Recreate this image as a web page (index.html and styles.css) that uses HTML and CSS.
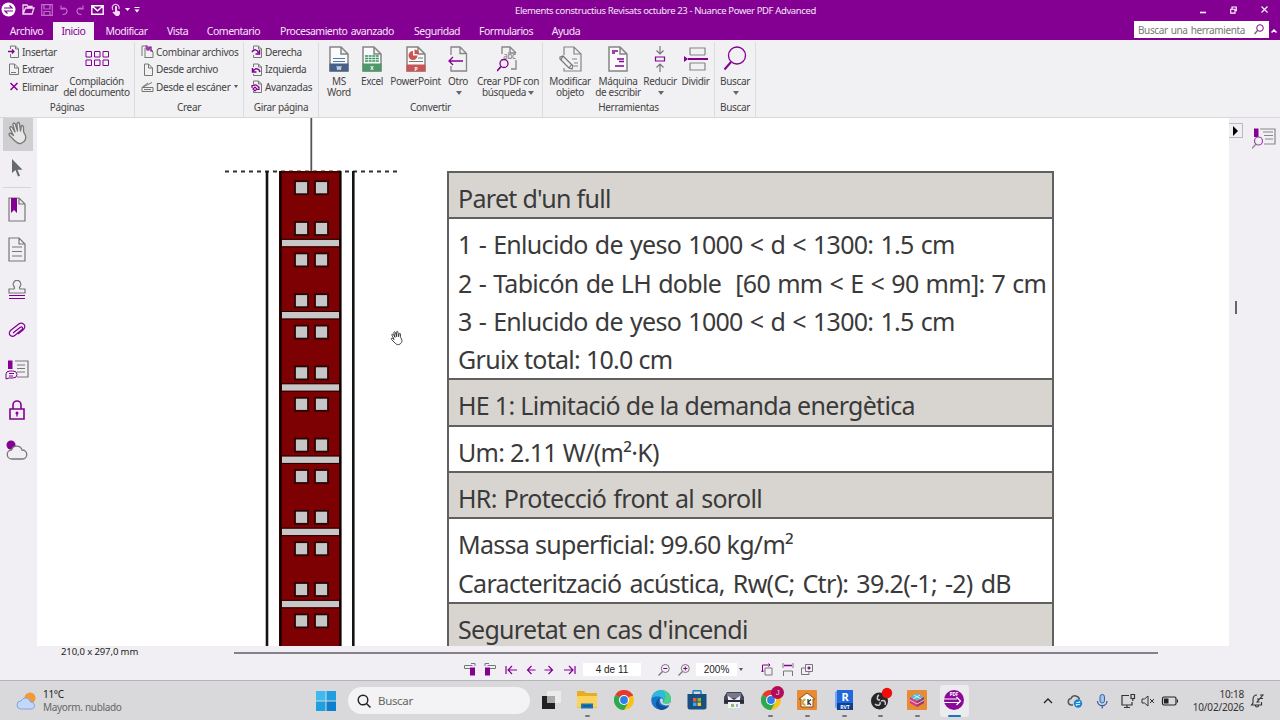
FILE: index.html
```html
<!DOCTYPE html>
<html lang="es">
<head>
    <meta charset="UTF-8">
    <meta name="viewport" content="width=device-width, initial-scale=1.0">
    <title>Elements constructius Revisats octubre 23 - Nuance Power PDF Advanced</title>
    <link rel="stylesheet" href="styles.css">
</head>
<body>
    <!-- Formas compartidas -->
    <svg class="defs">
        <symbol id="page" viewBox="0 0 20 26"><path d="M1 1h11l7 7v17H1zM12 1v7h7" fill="#fafafa" stroke="#858585" stroke-width="1.5"/></symbol>
        <symbol id="rotate" viewBox="0 0 12 13"><path d="M2.500 4V1h5l3 3v8.500h-8V10M7.500 1v3h3" fill="none" stroke="#777"/><path d="M1 7c2-3 5-3 6.500 1M8.500 5v4h-4" fill="none" stroke="#830093" stroke-width="1.500"/></symbol>
        <symbol id="chrome" viewBox="0 0 20 20"><circle cx="10" cy="10" r="10" fill="#fbc116"/><path d="M10 10 1.300 5A10 10 0 0 1 18.700 5z" fill="#e33b2e"/><path d="M1.300 5A10 10 0 0 0 10 20l4.500-8-4.500-2z" fill="#2da94f"/><path d="M10 5h8.700" stroke="#e33b2e" stroke-width="2"/><circle cx="10" cy="10" r="5" fill="#fff"/><circle cx="10" cy="10" r="3.900" fill="#2f7de9"/></symbol>
        <symbol id="hand" viewBox="0 0 22 24"><path d="M8 20 2.500 14.500c-1.500-2 .5-3 2-1.500l2 1.500L3 7.500C2.500 5.500 4.500 5 5.500 7l2.500 4L6 4c-.5-2 2-2.500 2.500-.5l2 6.500-.5-7c0-2 2.500-2 2.500 0l1 7 .8-4.500c.4-1.500 2.200-1.200 2.200.5v4c0 1 .5 2 1.500 3.500 1.500 3 1 5-1 7l-3 2c-2.500.5-4-.5-6-2.500z" fill="#fff" fill-opacity=".5" stroke="currentColor" stroke-width="1.300" stroke-linejoin="round"/></symbol>
    </svg>

    <!-- Barra de título -->
    <header class="titlebar">
        <div class="quick">
            <svg width="15" height="15" viewBox="0 0 15 15"><circle cx="7.500" cy="7.500" r="7" fill="#fff"/><path d="M3 6h8L8.500 3.500M12 9H4l2.500 2.500" fill="none" stroke="#830093" stroke-width="1.200"/></svg>
            <svg width="13" height="11" viewBox="0 0 13 11"><path d="M1 10V1h4l1 1.500h4V4M1 10l2.500-6H12l-2 6z" fill="none" stroke="#f3d9f6" stroke-width="1.300"/></svg>
            <svg class="dim" width="12" height="12" viewBox="0 0 12 12"><path d="M.7.700h10.600v10.600H.7zM3 1v4h6V1M3 11V7.500h6V11" fill="none" stroke="#e7b9ee" stroke-width="1.200"/></svg>
            <svg class="dim" width="10" height="10" viewBox="0 0 10 10"><path d="M2 .5v3.500h4M2 4c3-2 6-.5 6 2S6 9.500 3.500 9.500" fill="none" stroke="#e7b9ee" stroke-width="1.200"/></svg>
            <svg class="dim" width="10" height="10" viewBox="0 0 10 10"><path d="M8 .5v3.500H4M8 4C5 2 2 3.500 2 6s2 3.500 4.500 3.500" fill="none" stroke="#e7b9ee" stroke-width="1.200"/></svg>
            <svg width="13" height="10" viewBox="0 0 13 10"><path d="M.8.800h11.400v8.400H.8zl5.700 5 5.700-5" fill="none" stroke="#fff" stroke-width="1.400"/></svg>
            <svg width="12" height="13" viewBox="0 0 12 13"><path d="M3 7a3.500 3.500 0 1 1 6-1" fill="none" stroke="#e7b9ee" stroke-width="1.300"/><path d="M5 9V4c0-1.300 2-1.300 2 0v3.500l3 1v2.500l-1.500 2H6L2.500 9.500l1-1z" fill="#f3d9f6"/></svg>
            <svg width="5" height="3" viewBox="0 0 5 3"><path d="M0 0h5L2.500 3z" fill="#fff"/></svg>
            <svg width="6" height="6" viewBox="0 0 6 6"><path d="M.5 0h5v1h-5zM.5 2.500h5L3 5.500z" fill="#fff"/></svg>
        </div>
        <div class="window-title">Elements constructius Revisats octubre 23 - Nuance Power PDF Advanced</div>
        <div class="window-buttons">
            <svg width="6" height="8" viewBox="0 0 6 8"><path d="M0 6.500h6" stroke="#fff" stroke-width="1.600"/></svg>
            <svg width="7" height="8" viewBox="0 0 7 8"><path d="M2 3V1h4.300v3.800H5M.7 3.200H5v3.900H.7z" fill="none" stroke="#fff" stroke-width="1.100"/></svg>
            <svg width="7" height="7" viewBox="0 0 7 7"><path d="m.5.500 6 6m0-6-6 6" stroke="#fff" stroke-width="1.100"/></svg>
        </div>
    </header>

    <!-- Pestañas -->
    <nav class="tabs">
        <span>Archivo</span>
        <span class="active">Inicio</span>
        <span>Modificar</span>
        <span>Vista</span>
        <span>Comentario</span>
        <span>Procesamiento avanzado</span>
        <span>Seguridad</span>
        <span>Formularios</span>
        <span>Ayuda</span>
        <div class="tool-search">
            <span>Buscar una herramienta</span>
            <svg width="10" height="11" viewBox="0 0 10 11"><circle cx="6" cy="4" r="3.300" fill="none" stroke="#830093"/><path d="M3.500 6.500.5 10" stroke="#666" stroke-width="1.300"/></svg>
        </div>
        <svg class="collapse" width="6" height="4" viewBox="0 0 6 4"><path d="m.5 3.500 2.500-2.500 2.500 2.500" fill="none" stroke="#fff" stroke-width="1.500"/></svg>
    </nav>

    <!-- Cinta de opciones -->
    <section class="ribbon">
        <div class="group">
            <div class="group-body">
                <div class="small-list pages">
                    <span><svg width="12" height="13" viewBox="0 0 12 13"><path d="M2.500 4V1h5l3 3v8.500h-8V9M7.500 1v3h3" fill="none" stroke="#777"/><path d="M0 6.500h6M4 4.500l2 2-2 2" fill="none" stroke="#830093" stroke-width="1.300"/></svg>Insertar</span>
                    <span><svg width="12" height="13" viewBox="0 0 12 13"><path d="M1.500 1h5l4 4v6.500h-9zM6.500 1v4h4" fill="none" stroke="#777"/><path d="M3 9.500h5" stroke="#777"/></svg>Extraer</span>
                    <span><svg width="12" height="13" viewBox="0 0 12 13"><path d="m2.500 3 7 7m0-7-7 7" stroke="#830093" stroke-width="1.500"/></svg>Eliminar</span>
                </div>
                <div class="big compile">
                    <svg width="26" height="26" viewBox="0 0 26 26"><path d="M2 5.500h5.500v5.500H2zm8.500 0h5.500v5.500h-5.500zm8.500 0h5.500v5.500h-5.500zm-17 8.500h5.500v5.500H2zm8.500 0h5.500v5.500h-5.500zm8.500 0h5.500v5.500h-5.500z" fill="none" stroke="#830093"/></svg>
                    <span>Compilación<br>del documento</span>
                </div>
            </div>
            <div class="group-label">Páginas</div>
        </div>
        <div class="group">
            <div class="group-body">
                <div class="small-list create">
                    <span><svg width="13" height="13" viewBox="0 0 13 13"><path d="M1 11V1h3M4 12V3h4l4 4v5.500H3.500" fill="none" stroke="#777"/><path d="M4 1h2v4h2V2h2v4h2" fill="none" stroke="#830093" stroke-width="1.200"/></svg>Combinar archivos</span>
                    <span><svg width="13" height="13" viewBox="0 0 13 13"><path d="M3.500 1h4l4 4v7.500h-8zM7.500 1v4h4" fill="none" stroke="#777"/></svg>Desde archivo</span>
                    <span><svg width="13" height="13" viewBox="0 0 13 13"><path d="M1 7.500 11 2.500M1 7.500h11v4H1zM3 9.500h7M2 6.500 7 3" fill="none" stroke="#777"/></svg>Desde el escáner<i class="arrow"></i></span>
                </div>
            </div>
            <div class="group-label">Crear</div>
        </div>
        <div class="group">
            <div class="group-body">
                <div class="small-list turn">
                    <span><svg width="12" height="13"><use href="#rotate"/></svg>Derecha</span>
                    <span><svg width="12" height="13" viewBox="0 0 12 13"><path d="M2.500 4V1h5l3 3v8.500h-8V11M7.500 1v3h3" fill="none" stroke="#777"/><path d="M9 9C8 5 4 5 2 8M1.500 5v4h4" fill="none" stroke="#830093" stroke-width="1.500"/></svg>Izquierda</span>
                    <span><svg width="12" height="13" viewBox="0 0 12 13"><path d="M2.500 4V1h5l3 3v8.500h-8V11M7.500 1v3h3" fill="none" stroke="#777"/><path d="M1 8V5.500h2.500M1 6c3-2 6-1 7 2M8 6.500v3H5.500M2 9l2 2 2-2-2-2z" fill="none" stroke="#830093" stroke-width="1.200"/></svg>Avanzadas</span>
                </div>
            </div>
            <div class="group-label">Girar página</div>
        </div>
        <div class="group">
            <div class="group-body convert">
                <div class="big">
                    <svg width="20" height="26" viewBox="0 0 20 26"><use href="#page"/><path d="M.5 17.500h19v8H.5z" fill="#466088"/><path d="M4 12.500h12M4 15.500h12" stroke="#4c78ad"/><text x="10" y="24" class="tag">W</text></svg>
                    <span>MS<br>Word</span>
                </div>
                <div class="big">
                    <svg width="20" height="26" viewBox="0 0 20 26"><use href="#page"/><path d="M.5 17.500h19v8H.5z" fill="#4f9869"/><path d="M3 10h14M3 12.500h14M3 15h14" stroke="#34945b" stroke-width="1.500" stroke-dasharray="3 .6"/><text x="10" y="24" class="tag">X</text></svg>
                    <span>Excel</span>
                </div>
                <div class="big">
                    <svg width="20" height="26" viewBox="0 0 20 26"><use href="#page"/><path d="M.5 18.500h19v7H.5z" fill="#c65656"/><path d="M7 5a4.500 4.500 0 1 0 4.500 4.500H7z" fill="#cc5451"/><path d="M8.500 3.500V8H13a4.500 4.500 0 0 0-4.500-4.500z" fill="#cc5451"/><path d="M12 12h5M3 15.500h14" stroke="#777"/><text x="10" y="24.500" class="tag">P</text></svg>
                    <span>PowerPoint</span>
                </div>
                <div class="big">
                    <svg width="20" height="26" viewBox="0 0 20 26"><path d="M3 9V1h9l6.500 6.500V25H3v-5M12 1v6.500h6.500" fill="none" stroke="#858585" stroke-width="1.300"/><path d="M15 15H1m4-4-4 4 4 4" fill="none" stroke="#830093" stroke-width="1.300"/></svg>
                    <span>Otro<br><i class="arrow large"></i></span>
                </div>
                <div class="big">
                    <svg width="22" height="26" viewBox="0 0 22 26"><path d="M5 8V1h8l6 6M19 14v9h-5M5 13v1M13 1v6h6" fill="none" stroke="#858585" stroke-width="1.300"/><text x="12.500" y="13" class="abc">abc</text><circle cx="7" cy="17.500" r="4" fill="#f1f0f2" stroke="#830093" stroke-width="1.300"/><path d="m4 20.500-4 4.500" stroke="#830093" stroke-width="1.800"/></svg>
                    <span>Crear PDF con<br>búsqueda<i class="arrow large"></i></span>
                </div>
            </div>
            <div class="group-label">Convertir</div>
        </div>
        <div class="group">
            <div class="group-body tools">
                <div class="big">
                    <svg width="23" height="26" viewBox="0 0 23 26"><path d="M5 9V1h10l7 7v17H5v-3M15 1v7h7M13 13h5M15 17h4M15 20h4" fill="none" stroke="#858585" stroke-width="1.200"/><path d="m1 11 3-1 10 10-1 3-3-1L1 13zm3-1-2 4m8 8 3-4" fill="#f1f0f2" stroke="#777" stroke-width="1.200"/></svg>
                    <span>Modificar<br>objeto</span>
                </div>
                <div class="big">
                    <svg width="20" height="26" viewBox="0 0 20 26"><use href="#page"/><path d="M4 5h6M4 7h3M9 13h7M11 15.500h5M7 20h9" stroke="#830093" stroke-width="1.300"/></svg>
                    <span>Máquina<br>de escribir</span>
                </div>
                <div class="big">
                    <svg width="12" height="26" viewBox="0 0 12 26"><path d="M6 0v8M2.500 4.500 6 8l3.500-3.500M6 26v-8m-3.500 3.500L6 18l3.500 3.500" fill="none" stroke="#777" stroke-width="1.200"/><path d="M1.500 11h9v4h-9z" fill="none" stroke="#830093" stroke-width="1.200"/></svg>
                    <span>Reducir<br><i class="arrow large"></i></span>
                </div>
                <div class="big">
                    <svg width="24" height="26" viewBox="0 0 24 26"><path d="M6 9V2h15v7M6 17v7h15v-7M6 9h15M6 17h15" fill="none" stroke="#858585" stroke-width="1.200"/><path d="M4 13h20" stroke="#830093" stroke-width="2"/><path d="m0 10 4 3-4 3z" fill="#830093"/></svg>
                    <span>Dividir</span>
                </div>
            </div>
            <div class="group-label">Herramientas</div>
        </div>
        <div class="group">
            <div class="group-body find">
                <div class="big">
                    <svg width="24" height="26" viewBox="0 0 24 26"><circle cx="14" cy="9.500" r="8.500" fill="none" stroke="#830093" stroke-width="1.300"/><path d="m8 16-6.500 7.500" stroke="#830093" stroke-width="2"/></svg>
                    <span>Buscar<br><i class="arrow large"></i></span>
                </div>
            </div>
            <div class="group-label">Buscar</div>
        </div>
    </section>

    <!-- Zona de trabajo -->
    <main class="workspace">
        <aside class="left-tools">
            <div class="tool selected"><svg width="22" height="24"><use href="#hand"/></svg></div>
            <div class="tool pointer"><svg width="12" height="20" viewBox="0 0 12 20"><path d="M1 1v14l3.500-3 2.500 6.500 2-.8-2.500-6h5z" fill="#666a6c"/></svg></div>
            <div class="tool"><svg width="18" height="26" viewBox="0 0 18 26"><path d="M1 1h10l6 6v17H1zM11 1v6h6" fill="none" stroke="#777" stroke-width="1.200"/><path d="M3 1h6v15l-3-3-3 3z" fill="#830093"/></svg></div>
            <div class="tool"><svg width="18" height="26" viewBox="0 0 18 26"><path d="M1 1h10l6 6v17H1zM11 1v6h6M4 10h10M4 14.500h10M4 19h10" fill="none" stroke="#777" stroke-width="1.200"/></svg></div>
            <div class="tool"><svg width="18" height="20" viewBox="0 0 18 20"><path d="M1 13V9h5c1.500-1 0-2-.7-4a3.800 3.800 0 1 1 7.400 0c-.7 2-2.200 3-.7 4h5v4z" fill="none" stroke="#777" stroke-width="1.200"/><path d="M1 15.500h16M1 18.500h16" stroke="#830093" stroke-width="1.200"/></svg></div>
            <div class="tool"><svg width="18" height="18" viewBox="0 0 18 18"><path d="m5 12 7-5.500c2-1.500 3.500.5 2 2L8 13.500c-4 4-9 0-5.500-4L9.500 4c4-4 10 0 6 4.500L10 13" fill="none" stroke="#830093" stroke-width="1.200"/></svg></div>
            <div class="tool"><svg width="24" height="22" viewBox="0 0 24 22"><path d="M10 2h13v16H12M12 6h8M12 9.500h8M12 13h8" fill="none" stroke="#777" stroke-width="1.200"/><path d="M3 1.500h4.500V10H3z" fill="#830093"/><path d="M1 20v-5q0-3 4-3h3q4 0 4 3.500T8 19H4zM4 14.500h5M4 17h4" fill="none" stroke="#830093"/></svg></div>
            <div class="tool"><svg width="16" height="20" viewBox="0 0 16 20"><path d="M1 9h14v10H1zM4 9V5a4 4 0 0 1 8 0v4" fill="none" stroke="#830093" stroke-width="1.600"/><circle cx="8" cy="13" r="1.500" fill="#830093"/><path d="M8 13v3.500" stroke="#830093" stroke-width="1.300"/></svg></div>
            <div class="tool"><svg width="22" height="20" viewBox="0 0 22 20"><circle cx="5" cy="5" r="4.500" fill="#830093"/><path d="M6 19a4.500 4.500 0 0 1-.5-9 5.500 5.500 0 0 1 10.500 0 4.500 4.500 0 0 1 .5 9z" fill="#f1eff3" stroke="#777" stroke-width="1.300"/></svg></div>
        </aside>

        <div class="document">
            <!-- Sección del muro -->
            <svg class="wall" width="180" height="528" viewBox="220 118 180 528">
                <defs>
                    <g id="hole"><rect x="-6.500" y="-6.500" width="13" height="13" fill="#c6c6c6" stroke="#280505" stroke-width="1.800"/></g>
                    <g id="brick">
                        <use href="#hole" x="301.500" y="187.700"/><use href="#hole" x="321.500" y="187.700"/>
                        <use href="#hole" x="301.500" y="228.500"/><use href="#hole" x="321.500" y="228.500"/>
                        <rect x="282" y="239.800" width="57" height="6.500" fill="#c8c7c7"/>
                        <path d="M281 246.900h59M281 239.300h59" stroke="#220000"/>
                    </g>
                </defs>
                <path d="M225 171.500h172" stroke="#333" stroke-width="2" stroke-dasharray="4 4"/>
                <rect x="279" y="171" width="62" height="480" fill="#7d0003"/>
                <g>
                    <use href="#brick"/>
                    <use href="#brick" y="72.200"/>
                    <use href="#brick" y="144.400"/>
                    <use href="#brick" y="216.600"/>
                    <use href="#brick" y="288.800"/>
                    <use href="#brick" y="361"/>
                    <use href="#brick" y="433.200"/>
                </g>
                <path d="M280 172h60" stroke="#4b0000" stroke-width="2"/>
                <path d="M280.500 171v480M340.500 171v480" stroke="#0b0000" stroke-width="2.200"/>
                <path d="M267 171v480M353.300 171v480" stroke="#141414" stroke-width="2.600"/>
                <path d="M311.300 118v53" stroke="#555" stroke-width="1.800"/>
            </svg>

            <div class="sheet">
                <div class="row head">Paret d'un full</div>
                <div class="row">
                    <p class="spaced">1 - Enlucido de yeso 1000 &lt; d &lt; 1300: 1.5 cm</p>
                    <p class="spaced">2 - Tabicón de LH doble&nbsp; [60 mm &lt; E &lt; 90 mm]: 7 cm</p>
                    <p class="spaced">3 - Enlucido de yeso 1000 &lt; d &lt; 1300: 1.5 cm</p>
                    <p>Gruix total: 10.0 cm</p>
                </div>
                <div class="row head">HE 1: Limitació de la demanda energètica</div>
                <div class="row">Um: 2.11 W/(m²·K)</div>
                <div class="row head spaced">HR: Protecció front al soroll</div>
                <div class="row">
                    <p>Massa superficial: 99.60 kg/m²</p>
                    <p class="extra-spaced">Caracterització acústica, Rw(C; Ctr): 39.2(-1; -2) dB</p>
                </div>
                <div class="row head">Seguretat en cas d'incendi</div>
            </div>
            <svg class="cursor" width="14" height="16" viewBox="0 0 22 24"><use href="#hand"/></svg>
        </div>

        <div class="gutter">
            <div class="expand"><svg width="5" height="10" viewBox="0 0 5 10"><path d="m0 0 5 5-5 5z" fill="#000"/></svg></div>
            <div class="thumb"></div>
        </div>
        <aside class="right-tools">
            <svg width="24" height="23" viewBox="0 0 24 23"><path d="M8 2h15v15H12M11 5h10M12 8.500h9M13 12h8" fill="none" stroke="#888" stroke-width="1.200"/><path d="M2 1.500h4.500V10H2z" fill="#830093"/><circle cx="6.500" cy="14" r="4" fill="#f1eff3" stroke="#9a4aa5" stroke-width="1.200"/><path d="m4 17-4 4.500" stroke="#888" stroke-width="1.200"/></svg>
        </aside>
    </main>

    <!-- Barra de estado -->
    <footer class="status">
        <div class="status-top">
            <span>210,0 x 297,0 mm</span>
            <div class="hscroll"></div>
        </div>
        <div class="status-nav">
            <svg viewBox="0 0 12 13"><path d="M6 5.500H.5V2.500h8" fill="none" stroke="#777"/><path d="M6 4.500h5v8H6z" fill="#830093"/><path d="M7 .5h4V3" fill="none" stroke="#777"/></svg>
            <svg viewBox="0 0 12 13"><path d="M6 5.500h5.500V2.500h-8" fill="none" stroke="#777"/><path d="M1 4.500h5v8H1z" fill="#830093"/><path d="M5 .5H1V3" fill="none" stroke="#777"/></svg>
            <svg viewBox="0 0 12 13" class="line"><path d="M1 3v8M12 7H3m4-4L3 7l4 4"/></svg>
            <svg viewBox="0 0 12 13" class="line"><path d="M10.500 7h-8m4-4-4 4 4 4"/></svg>
            <svg viewBox="0 0 12 13" class="line"><path d="M1.500 7h8m-4-4 4 4-4 4"/></svg>
            <svg viewBox="0 0 12 13" class="line"><path d="M11 3v8M0 7h9M5 3l4 4-4 4"/></svg>
            <div class="field page-field">4 de 11</div>
            <svg viewBox="0 0 12 13"><circle cx="7.300" cy="5.500" r="4" fill="none" stroke="#777"/><path d="M5.300 5.500h4" stroke="#830093"/><path d="m4.500 8.500-4 4" stroke="#777" stroke-width="1.300"/></svg>
            <svg viewBox="0 0 12 13"><circle cx="7.300" cy="5.500" r="4" fill="none" stroke="#777"/><path d="M5.300 5.500h4m-2-2v4" stroke="#830093"/><path d="m4.500 8.500-4 4" stroke="#777" stroke-width="1.300"/></svg>
            <div class="field zoom-field">200%</div>
            <i class="arrow"></i>
            <svg viewBox="0 0 12 13"><path d="M4 5h7v7H4z" fill="none" stroke="#777"/><path d="M1.500 9V2H9M0 7.500 1.500 9 3 7.500M7.500.5 9 2 7.500 3.500" fill="none" stroke="#830093"/></svg>
            <svg viewBox="0 0 12 13"><path d="M1 0v5M11 0v5M1.500 13V8h9v5" fill="none" stroke="#777"/><path d="M2 2.500h8" stroke="#830093" stroke-width="1.500"/></svg>
            <svg viewBox="0 0 12 13"><path d="M4.500 1.500h7v7h-7zM4.500 5H.5v6.500H8v-3" fill="none" stroke="#777"/><path d="M6.500 5h3M8 3.500v3" stroke="#830093" stroke-width="1.300"/></svg>
        </div>
    </footer>

    <!-- Barra de tareas -->
    <footer class="taskbar">
        <div class="weather">
            <svg width="20" height="18" viewBox="0 0 20 18"><circle cx="14" cy="6" r="5.500" fill="#f29a33"/><path d="M5 17a4 4 0 0 1 0-8 5 5 0 0 1 9.500 1A3.600 3.600 0 0 1 16 17z" fill="#c2d7fa" stroke="#83a5e0"/></svg>
            <div><b>11°C</b><br>Mayorm. nublado</div>
        </div>
        <svg class="start" width="20" height="20" viewBox="0 0 20 20"><path d="M0 0h9.500v9.500H0z" fill="#3fb9ee"/><path d="M10.500 0H20v9.500h-9.500zM0 10.500h9.500V20H0z" fill="#1e9fe0"/><path d="M10.500 10.500H20V20h-9.500z" fill="#0d7fce"/></svg>
        <div class="search">
            <svg width="14" height="14" viewBox="0 0 14 14"><circle cx="6" cy="6" r="4.800" fill="none" stroke="#222" stroke-width="1.400"/><path d="m9.500 9.500 4 4" stroke="#222" stroke-width="1.500"/></svg>
            Buscar
        </div>
        <div class="apps">
            <div class="app"><svg viewBox="0 0 20 20"><path d="M1 6h13v13H1z" fill="#222"/><path d="M6 1h14v12H6z" fill="#eee" opacity=".85"/><path d="M6 6h8v7H6z" fill="#aaa"/></svg></div>
            <div class="app run"><svg viewBox="0 0 20 20"><path d="M0 1h7l2 2h11v15H0z" fill="#e9ad22"/><path d="M0 6h20v11.500H0z" fill="#fbd25b"/><path d="M4 13.500h12v5H4z" fill="#1675b5"/><path d="M6 16h8" stroke="#0d4f86"/></svg></div>
            <div class="app"><svg><use href="#chrome"/></svg></div>
            <div class="app"><svg viewBox="0 0 20 20"><circle cx="10" cy="10" r="9.800" fill="#1976c9"/><path d="M.5 8C2 2 6 0 10 0c6 0 10 4.500 10 9 0 3-2 5-5.500 5-3 0-3-1.500-2-3 .5-4-6-6-12-3z" fill="#2fb9dc"/><path d="M12 .3c5 .7 8 4.500 8 8.700 0 3-2 5-5.500 5-2 0-2.500-1-2.500-2 4-3 3-8 0-11.700z" fill="#4fd087"/><path d="M9 8c-4 5 1 10 9 8-2 2.500-5 4-8 4-5-1-8-8-1-12z" fill="#104f9b"/><path d="M9 10c0 4 4 6.500 9.500 5L20 12c-2 2-5 2.500-7.500 1.500C11 12 12 11 12 10c-.5-2-3-2-3 0z" fill="#d9d8da"/></svg></div>
            <div class="app"><svg viewBox="0 0 20 20"><path d="M6 4V1.500Q6 .8 7 .8h6q1 0 1 .7V4" fill="none" stroke="#1b83bb" stroke-width="1.500"/><path d="M.5 4h19v13q0 2.500-2.500 2.500H3Q.5 19.500.5 17z" fill="#184f80"/><path d="M6 8h3.500v3.500H6z" fill="#ef5a32"/><path d="M10.500 8H14v3.500h-3.500z" fill="#85be2c"/><path d="M6 12.500h3.500V16H6z" fill="#34aae6"/><path d="M10.500 12.500H14V16h-3.500z" fill="#fcc526"/></svg></div>
            <div class="app"><svg viewBox="0 0 20 20"><path d="M3 2h14l3 5v7H0V7z" fill="#434554"/><path d="M3 3h14v5H3z" fill="#777989"/><path d="m4 6 6 4 6-4v6H4z" fill="#e9efff"/><path d="M0 10h20v3H0z" fill="#2c2c39"/><path d="M4 12h12v6H4z" fill="#f2f2f2"/><path d="M7 14h3v3H7z" fill="#91bc66"/><path d="M12 14h2v3h-2z" fill="#9bb3d6"/></svg></div>
            <div class="app run"><svg><use href="#chrome"/></svg><span class="badge">J</span></div>
            <div class="app run"><svg viewBox="0 0 20 20"><rect width="20" height="20" rx="1" fill="#e78c35"/><path d="m10 3 8 6h-2v8H4V9H2z" fill="#fff" stroke="#8a5217"/><path d="M11 9v6M14 9.500l-3 2.500 3 3" fill="none" stroke="#333" stroke-width="1.200"/><path d="M8.500 9.500a2.500 2.500 0 0 0 0 5.500" fill="none" stroke="#e1a22e" stroke-width="2"/></svg></div>
            <div class="app run"><svg viewBox="0 0 20 20"><path d="M1 2 4 0v20l-3-3z" fill="#70a9f1"/><path d="M3 0h16v13H3z" fill="#2068dc"/><path d="M3 13h16v7H3z" fill="#0d3f93"/><text x="11" y="11" class="rvt">R</text><text x="11" y="18.500" class="rvt-sub">RVT</text></svg></div>
            <div class="app run"><svg viewBox="0 0 20 20"><circle cx="8.500" cy="11" r="8.500" fill="#25262a"/><path d="M9 10c-4 0-3-4-1-5M10 11c4-2 5 2 4 4M9 12c1 4-3 4-5 2" fill="none" stroke="#ccc" stroke-width="1.500"/><circle cx="16" cy="3" r="5.200" fill="#f10c0c"/></svg></div>
            <div class="app run"><svg viewBox="0 0 20 20"><rect width="20" height="20" rx="1" fill="#e78c35"/><path d="m3 7 7-4 7 4-7 4z" fill="#59bad4"/><path d="m3 7 7 4v6l-7-4z" fill="#d6397b"/><path d="m17 7-7 4v6l7-4z" fill="#9d356c"/><path d="m7 5 7 4M13 5 6 9M3 10l7 4 7-4" stroke="#fff" fill="none" stroke-width=".7"/></svg></div>
            <div class="app current"><svg viewBox="0 0 20 20"><circle cx="10" cy="10" r="10" fill="#8b0b99"/><path d="M0 12.500h16M0 9h13M12.500 7l4 4-4 4" stroke="#fff" stroke-width="1.200" fill="none"/><text x="10" y="6" class="pdf">PDF</text></svg></div>
        </div>
        <div class="tray">
            <svg viewBox="0 0 18 16"><path d="m5 10 4-4 4 4" fill="none" stroke="#222" stroke-width="1.300"/></svg>
            <svg viewBox="0 0 18 16"><path d="M7 12H5a3.300 3.300 0 0 1 0-6.500 4.500 4.500 0 0 1 8.500 1" fill="none" stroke="#555" stroke-width="1.500"/><circle cx="12" cy="10.500" r="4.200" fill="#1686d5"/><path d="M10 9.500h4l-1-1.500M14 11.500h-4l1 1.500" fill="none" stroke="#fff" stroke-width=".8"/></svg>
            <svg viewBox="0 0 18 16"><rect x="7" y="1.500" width="4.500" height="8.500" rx="2.250" fill="#9ec3ee" stroke="#3562a5"/><path d="M4.500 8a4.700 4.700 0 0 0 9.500 0M9.300 13v2.500" fill="none" stroke="#3562a5" stroke-width="1.300"/></svg>
            <svg viewBox="0 0 18 16"><path d="M10 2.500H3v9.500h10V9M5 14.500h6M8 12v2" fill="none" stroke="#333" stroke-width="1.200"/><path d="M12 1.500h3.500v4H12zM13.800 5.500V8" fill="none" stroke="#333" stroke-width="1.200"/></svg>
            <svg viewBox="0 0 18 16"><path d="M3 6h2.500L9 3v10l-3.500-3H3zM11 6l4 4m0-4-4 4" fill="none" stroke="#333"/></svg>
            <svg viewBox="0 0 18 16"><rect x="1.500" y="4" width="13.500" height="8" rx="1.500" fill="none" stroke="#222" stroke-width="1.200"/><path d="M3 5.500h4.500v5H3zM16 6.500h1v3h-1z" fill="#222"/></svg>
            <div class="clock">10:18<br>10/02/2026</div>
            <svg viewBox="0 0 18 16"><path d="M9 2C5.500 2 5 5 5 7v3l-1.500 2h10V9M7.500 12.500c0 2 3 2 3 0M9 6h2.500L9 9h2.500M12 2h3l-3 3.500h3" fill="none" stroke="#333" stroke-width="1.100"/></svg>
        </div>
    </footer>
</body>
</html>
```

FILE: styles.css
```css
/* Estilo general */
* {
    box-sizing: border-box;
}

body {
    margin: 0;
    width: 1280px;
    height: 720px;
    overflow: hidden;
    display: flex;
    flex-direction: column;
    font-family: "Noto Sans", "Open Sans", sans-serif;
    font-size: 10px;
    letter-spacing: -0.33px;
    color: #444;
    background-color: #f1eff3;
    white-space: nowrap;
}

svg {
    display: block;
    flex: none;
}

.defs {
    display: none;
}

/* Barra de título */
.titlebar {
    height: 22px;
    flex: none;
    display: grid;
    grid-template-columns: 400px 531px 349px;
    align-items: center;
    background-color: #830093;
    color: #f6e6f8;
}

.quick {
    display: flex;
    align-items: center;
    gap: 6px;
    padding-left: 1px;
    padding-bottom: 3px;
}

.quick svg:nth-child(8) {
    margin-left: -3px;
}

.quick svg:nth-child(9) {
    margin-left: -2px;
}

.dim {
    opacity: 0.6;
}

.window-title {
    text-align: center;
    font-size: 9.5px;
    letter-spacing: -0.37px;
    padding-bottom: 1px;
}

.window-buttons {
    display: flex;
    justify-content: flex-end;
    gap: 24px;
    padding-right: 12px;
    padding-bottom: 2px;
}

/* Pestañas */
.tabs {
    height: 18px;
    flex: none;
    display: grid;
    grid-template-columns: 53px 41px 65px 37px 75px 132px 68px 70px 50px 678px 11px;
    background-color: #830093;
    color: #f6e6f8;
    font-size: 10.5px;
    letter-spacing: -0.5px;
    word-spacing: 1px;
    line-height: 18px;
    text-align: center;
}

.tabs .active {
    background-color: #f5f3f6;
    color: #830093;
}

.tool-search {
    width: 135px;
    height: 17px;
    margin-top: -1px;
    justify-self: end;
    display: flex;
    align-items: center;
    justify-content: space-between;
    padding: 0 5px 0 4px;
    background-color: #fff;
    color: #777;
    font-size: 10px;
    letter-spacing: -0.4px;
}

.collapse {
    margin: 7px 0 0 2px;
}

/* Cinta de opciones */
.ribbon {
    height: 78px;
    flex: none;
    display: grid;
    grid-template-columns: 135px 109px 75px 224px 172px 41px;
    padding-top: 2px;
    background-color: #f1f0f2;
    border-bottom: 1px solid #d8d7d9;
}

.group {
    border-right: 1px solid #dcdbdd;
}

.group-body {
    height: 56px;
    display: flex;
}

.group-label {
    height: 18px;
    line-height: 18px;
    text-align: center;
}

.small-list {
    display: flex;
    flex-direction: column;
    padding-top: 1px;
}

.small-list span {
    height: 17.5px;
    display: flex;
    align-items: center;
    gap: 2px;
}

.pages {
    padding-left: 8px;
    width: 62px;
}

.create {
    padding-left: 6px;
}

.turn {
    padding-left: 7px;
}

.big {
    display: flex;
    flex-direction: column;
    align-items: center;
    padding-top: 4px;
    line-height: 11px;
    text-align: center;
}

.big svg {
    margin-bottom: 4px;
}

.compile {
    width: 69px;
}

.convert {
    display: grid;
    grid-template-columns: 26px 40px 47px 38px 62px;
    padding-left: 7px;
}

.tools {
    display: grid;
    grid-template-columns: 46px 50px 34px 37px;
    padding-left: 4px;
}

.find {
    justify-content: center;
}

.arrow {
    display: inline-block;
    width: 0;
    height: 0;
    margin-left: 2px;
    border: 2.5px solid transparent;
    border-top: 3px solid #555;
    border-bottom: 0;
}

.arrow.large {
    margin-left: 2px;
    border-width: 4px 3.5px 0;
    border-top-color: #666;
    vertical-align: 1px;
}

.tag {
    font-size: 5px;
    font-weight: bold;
    fill: #fff;
    text-anchor: middle;
    letter-spacing: 0;
}

.abc {
    font-size: 8px;
    fill: #777;
    text-anchor: middle;
}

/* Zona de trabajo */
.workspace {
    height: 528px;
    flex: none;
    display: flex;
}

.left-tools {
    width: 37px;
    display: flex;
    flex-direction: column;
}

.tool {
    width: 33px;
    height: 40px;
    display: flex;
    align-items: center;
    justify-content: center;
}

.tool.selected {
    width: 30px;
    height: 33px;
    margin-left: 3px;
    padding: 0 1px 3px 0;
    background-color: #cfced0;
    color: #777;
}

.tool.pointer {
    width: 28px;
    height: 37px;
    margin: 0 3px 2px;
    padding-bottom: 2px;
    border-bottom: 1px solid #d5d4d6;
}

.document {
    position: relative;
    width: 1192px;
    display: flex;
    overflow: hidden;
    background-color: #fff;
}

.wall {
    margin-left: 183px;
}

/* Tabla de características */
.sheet {
    width: 607px;
    height: 600px;
    margin: 53px 0 0 47px;
    border: 2px solid #606060;
    border-top: 0;
    font-size: 25px;
    letter-spacing: -0.7px;
    line-height: 38.3px;
    color: #3a3a3a;
}

.row {
    padding: 6px 0 0 9px;
    border-top: 2px solid #606060;
}

.row.head {
    background-color: #d8d5d1;
}

.row p {
    margin: 0;
}

.spaced {
    word-spacing: 1.3px;
}

.extra-spaced {
    word-spacing: 2.2px;
}

/* Puntero de la mano sobre la página */
.cursor {
    position: absolute;
    left: 353px;
    top: 212px;
    color: #222;
}

.gutter {
    width: 14px;
    display: flex;
    flex-direction: column;
    align-items: center;
}

.expand {
    width: 14px;
    height: 15px;
    margin-top: 5px;
    display: flex;
    align-items: center;
    justify-content: center;
    border: 1px solid #bbb;
    border-left: 0;
}

.thumb {
    width: 2px;
    height: 13px;
    margin-top: 163px;
    background-color: #666;
}

.right-tools {
    padding: 9px 0 0 9px;
}

/* Barra de estado */
.status {
    height: 35px;
    flex: none;
    border-bottom: 1px solid #b5b4b6;
}

.status-top {
    height: 12px;
    display: flex;
    align-items: center;
    padding-left: 61px;
    color: #222;
}

.status-top span {
    width: 173px;
    margin-top: -1px;
    font-size: 9.5px;
    letter-spacing: -0.1px;
}

.hscroll {
    width: 924px;
    height: 2px;
    margin-top: 2px;
    background-color: #858188;
}

.status-nav {
    height: 22px;
    display: grid;
    grid-template-columns: 20px 21px 20px 18px 21px 19px 75px 20px 18px 43px 22px 21px 19px 14px;
    align-items: center;
    padding-left: 464px;
    color: #222;
    font-family: "Liberation Sans", Arial, sans-serif;
    letter-spacing: 0;
}

.status-nav svg {
    width: 12px;
    height: 13px;
}

.status-nav .line {
    fill: none;
    stroke: #830093;
    stroke-width: 1.2;
}

.field {
    height: 13px;
    line-height: 13px;
    background-color: #fff;
    text-align: center;
}

.page-field {
    width: 58px;
}

.zoom-field {
    width: 41px;
}

.status-nav .arrow {
    margin-left: 0;
}

/* Barra de tareas */
.taskbar {
    height: 39px;
    flex: none;
    display: flex;
    align-items: center;
    background-color: #d9d8da;
    font-size: 10px;
}

.weather {
    width: 316px;
    display: flex;
    align-items: center;
    gap: 7px;
    padding-left: 16px;
    line-height: 13px;
    color: #666;
}

.weather b {
    font-weight: normal;
    color: #222;
}

.search {
    width: 182px;
    height: 27px;
    margin-left: 12px;
    display: flex;
    align-items: center;
    gap: 7px;
    padding-left: 9px;
    border-radius: 14px;
    background-color: #f3f2f4;
    color: #666;
    font-size: 11.5px;
}

.apps {
    display: flex;
    margin-left: 2px;
}

.app {
    position: relative;
    width: 36.7px;
    height: 32px;
    padding: 5px 0 0 8.5px;
}

.app svg {
    width: 20px;
    height: 20px;
    overflow: visible;
}

.app.run::after,
.app.current::after {
    content: "";
    position: absolute;
    left: 16px;
    bottom: 0;
    width: 5px;
    height: 2px;
    border-radius: 1px;
    background-color: #777;
}

.app.current::before {
    content: "";
    position: absolute;
    left: 4px;
    top: 0;
    width: 29px;
    height: 32px;
    border-radius: 3px;
    background-color: #ecebed;
}

.app.current svg {
    position: relative;
}

.app.current::after {
    left: 12px;
    width: 13px;
    background-color: #1677bd;
}

.badge {
    position: absolute;
    left: 19px;
    top: 1px;
    width: 13px;
    height: 13px;
    border-radius: 50%;
    background-color: #b00b5c;
    color: #f5c9dd;
    font-family: "Liberation Sans", Arial, sans-serif;
    font-size: 8px;
    line-height: 13px;
    text-align: center;
}

.rvt {
    font-size: 11px;
    font-weight: bold;
    fill: #fff;
    text-anchor: middle;
}

.rvt-sub {
    font-size: 5px;
    font-weight: bold;
    fill: #fff;
    text-anchor: middle;
    letter-spacing: 0;
}

.pdf {
    font-size: 4.5px;
    font-weight: bold;
    fill: #fff;
    text-anchor: middle;
    letter-spacing: 0;
}

.tray {
    margin-left: auto;
    display: grid;
    grid-template-columns: 27px 27px 26px 20px 22px 28px 55px 36px;
    align-items: center;
    color: #333;
}

.tray svg {
    width: 18px;
    height: 16px;
}

.tray .clock {
    text-align: right;
    line-height: 13px;
    letter-spacing: -0.2px;
}

.clock + svg {
    margin-left: 4px;
}
```
